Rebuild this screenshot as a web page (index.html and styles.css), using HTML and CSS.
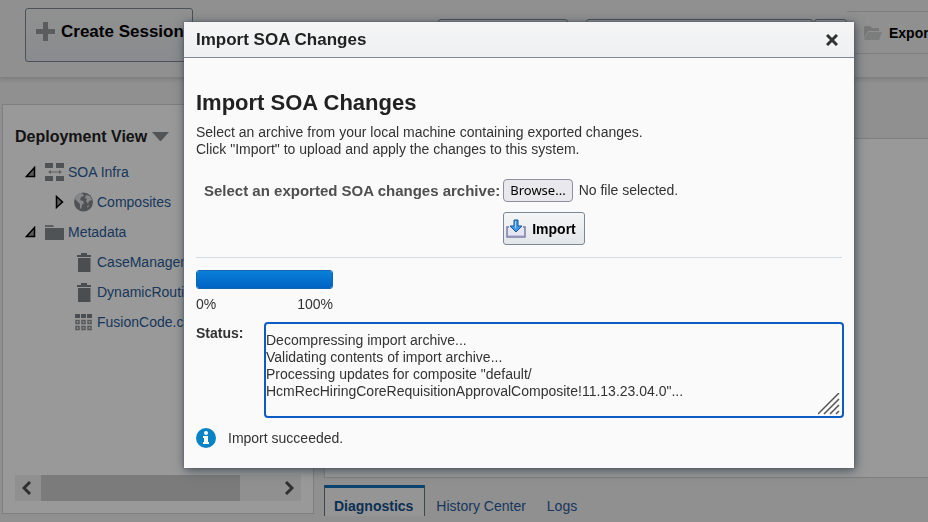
FILE: index.html
```html
<!DOCTYPE html>
<html lang="en">
<head>
    <meta charset="UTF-8">
    <title>Import SOA Changes</title>
    <link rel="stylesheet" href="styles.css">
</head>
<body>
    <header class="toolbar">
        <button class="create-button" type="button">
            <svg width="20" height="20" viewBox="0 0 20 20"><path d="M7 0h5v7h7v5h-7v7H7v-7H0V7h7z" fill="#96999c"/></svg>
            Create Session
        </button>
        <div class="toolbar-fields">
            <div class="field"></div>
            <div class="field field-wide"></div>
            <div class="field field-small"></div>
        </div>
        <div class="toolbar-actions">
            <button class="export-button" type="button">
                <svg width="20" height="16" viewBox="0 0 20 16"><path d="M1 13V2l1-1h5l2 2h7v3H5z" fill="#c8c9ca"/><path d="M1 15l4-8h14l-3 8z" fill="#cfd0d1"/></svg>
                Export
            </button>
        </div>
    </header>

    <main class="content">
        <section class="side-panel">
            <h2 class="side-title">Deployment View
                <svg width="17" height="10" viewBox="0 0 17 10"><path d="M0 0h17L9 9H8z" fill="#8a8d90"/></svg>
            </h2>
            <ul class="tree">
                <li class="node">
                    <svg class="arrow" width="12" height="12" viewBox="0 0 12 12"><path d="M9.500 1.500v9h-8z" fill="#999" stroke="#000" stroke-width="1.500"/></svg>
                    <svg class="icon" width="20" height="20" viewBox="0 0 20 20" fill="#868b8f"><path d="M0 1h8v5H0zM11 1h8v5h-8zM0 14h8v5H0zM11 14h8v5h-8z"/><path d="M3 10l3-2v1.500h8V8l3 2-3 2v-1.500H6V12z" fill="#9a9da0"/></svg>
                    <a href="#">SOA Infra</a>
                </li>
                <li class="node node-child">
                    <svg class="arrow" width="12" height="14" viewBox="0 0 12 14"><path d="M2.500 1.500v11l6-5.500z" fill="#999" stroke="#000" stroke-width="1.500"/></svg>
                    <svg class="icon" width="20" height="20" viewBox="0 0 20 20"><circle cx="9.500" cy="10" r="9.500" fill="#868b8f"/><path d="M2 4l4-3 3 1 1 2-3 1-1 3 3 1 1 2-2 2-1 4-1-1v-4L3 9 1 7zM12 3l4 1 2 4-3 1-1 3-2-3 1-2-2-1zM13 14l2-1-1 3z" fill="#dfe1e3"/></svg>
                    <a href="#">Composites</a>
                </li>
                <li class="node">
                    <svg class="arrow" width="12" height="12" viewBox="0 0 12 12"><path d="M9.500 1.500v9h-8z" fill="#999" stroke="#000" stroke-width="1.500"/></svg>
                    <svg class="icon" width="20" height="20" viewBox="0 0 20 20"><path d="M0 3h8l1 2H0z" fill="#9a9ea2"/><path d="M0 6h19v12H0z" fill="#868b8f"/></svg>
                    <a href="#">Metadata</a>
                </li>
                <li class="node node-child">
                    <span class="arrow"></span>
                    <svg class="icon" width="20" height="20" viewBox="0 0 20 20" fill="#7e8387"><path d="M3 3h4V1h6v2h4v2H3zM4 6h12.500v14H4z"/></svg>
                    <a href="#">CaseManagement</a>
                </li>
                <li class="node node-child">
                    <span class="arrow"></span>
                    <svg class="icon" width="20" height="20" viewBox="0 0 20 20" fill="#7e8387"><path d="M3 3h4V1h6v2h4v2H3zM4 6h12.500v14H4z"/></svg>
                    <a href="#">DynamicRouting</a>
                </li>
                <li class="node node-child">
                    <span class="arrow"></span>
                    <svg class="icon" width="20" height="20" viewBox="0 0 20 20"><path d="M1 2h5v4H1zM7 2h5v4H7zM13 2h5v4h-5z" fill="#7e8387"/><g fill="none" stroke="#8e9295" stroke-width="1.500"><path d="M2 8.500h3v3H2zM8 8.500h3v3H8zM14 8.500h3v3h-3zM2 14.500h3v3H2zM8 14.500h3v3H8zM14 14.500h3v3h-3z"/></g></svg>
                    <a href="#">FusionCode.core</a>
                </li>
            </ul>
            <div class="scrollbar">
                <button class="scroll-button" type="button" aria-label="Scroll left">
                    <svg width="12" height="14" viewBox="0 0 12 14"><path d="M8 1L2 7l6 6" fill="none" stroke="#505050" stroke-width="3"/></svg>
                </button>
                <div class="scroll-track"><div class="scroll-thumb"></div></div>
                <button class="scroll-button" type="button" aria-label="Scroll right">
                    <svg width="12" height="14" viewBox="0 0 12 14"><path d="M4 1l6 6-6 6" fill="none" stroke="#505050" stroke-width="3"/></svg>
                </button>
            </div>
        </section>
        <section class="work-area">
            <div class="work-panel"></div>
            <nav class="tabs">
                <a class="tab tab-active" href="#">Diagnostics</a>
                <a class="tab" href="#">History Center</a>
                <a class="tab" href="#">Logs</a>
            </nav>
        </section>
    </main>

    <div class="overlay"></div>

    <div class="dialog" role="dialog" aria-labelledby="dialog-title">
        <div class="dialog-header">
            <div class="dialog-title" id="dialog-title">Import SOA Changes</div>
            <button class="close-button" type="button" aria-label="Close">
                <svg width="12" height="12" viewBox="0 0 12 12"><path d="M1 1l10 10M11 1L1 11" stroke="#333" stroke-width="3"/></svg>
            </button>
        </div>
        <div class="dialog-body">
            <h1>Import SOA Changes</h1>
            <p class="intro">Select an archive from your local machine containing exported changes.<br>Click "Import" to upload and apply the changes to this system.</p>

            <div class="import-form">
                <label class="form-label" for="archive">Select an exported SOA changes archive:</label>
                <div class="file-picker">
                    <input class="file-input" type="file" id="archive">
                    <label class="browse-button" for="archive">Browse...</label>
                    <span>No file selected.</span>
                </div>
                <button class="import-button" type="button">
                    <svg width="20" height="20" viewBox="0 0 20 20">
                        <path d="M3 8H1v10h18V8h-2" fill="#e6e6f2" stroke="#7b7ba8" stroke-width="1.500"/>
                        <path d="M2 16h16v1H2z" fill="#c3c3dc"/>
                        <path d="M8 1h4v6h4l-6 6-6-6h4z" fill="#3f9be8" stroke="#17559f"/>
                        <path d="M9 2h1v7H9z" fill="#a9d8ff"/>
                    </svg>
                    Import
                </button>
            </div>

            <div class="progress-area">
                <progress class="progress" value="100" max="100" aria-label="Import progress"></progress>
                <div class="progress-scale"><span>0%</span><span>100%</span></div>
            </div>

            <div class="status-row">
                <label class="status-label" for="status">Status:</label>
                <div class="status-box">
                    <textarea class="status-text" id="status" readonly>Decompressing import archive...
Validating contents of import archive...
Processing updates for composite "default/
HcmRecHiringCoreRequisitionApprovalComposite!11.13.23.04.0"...</textarea>
                    <svg class="grip" width="22" height="22" viewBox="0 0 22 22"><path d="M0 21L21 0M6 21L21 6M12 21l9-9M18 21l3-3" stroke="#555" stroke-width="1.500"/></svg>
                </div>
            </div>

            <div class="message">
                <svg width="20" height="20" viewBox="0 0 20 20"><circle cx="10" cy="10" r="10" fill="#0a83c6"/><circle cx="10" cy="5" r="2" fill="#fff"/><path d="M7 8h5v6h1v2H7v-2h1v-4H7z" fill="#fff"/></svg>
                <span>Import succeeded.</span>
            </div>
        </div>
    </div>
</body>
</html>
```

FILE: styles.css
```css
* {
    box-sizing: border-box;
}
body {
    margin: 0;
    height: 100vh;
    overflow: hidden;
    display: flex;
    flex-direction: column;
    background: #f0f0f0;
    color: #333;
    font-family: "Liberation Sans", Arial, sans-serif;
    font-size: 14px;
    line-height: 17px;
}
button {
    font-family: inherit;
    cursor: pointer;
}
a {
    color: #2a5c9a;
    text-decoration: none;
}
ul, h1, h2, p {
    margin: 0;
    padding: 0;
    list-style: none;
}

/* Toolbar */
.toolbar {
    flex: none;
    display: flex;
    align-items: flex-start;
    height: 78px;
    padding: 8px 0 0 25px;
    border-bottom: 1px solid #d8d8d8;
    box-shadow: 0 2px 4px rgba(0,0,0,0.12);
}
.create-button {
    flex: none;
    width: 168px;
    height: 54px;
    display: flex;
    align-items: flex-start;
    gap: 5px;
    padding: 13px 10px;
    border: 1px solid #7d8894;
    border-radius: 3px;
    background: linear-gradient(#f2f2f2, #e4e8ed);
    color: #000;
    font-size: 17px;
    font-weight: bold;
    line-height: 20px;
    white-space: nowrap;
}
.create-button svg, .export-button svg {
    flex: none;
}
.toolbar-fields {
    flex: 1;
    display: flex;
    padding: 11px 0 0 245px;
}
.field {
    width: 130px;
    height: 32px;
    margin-right: 18px;
    border: 1px solid #7d8894;
    border-radius: 3px;
}
.field-wide {
    width: 227px;
    margin-right: 1px;
}
.field-small {
    width: 33px;
    margin-right: 0;
}
.toolbar-actions {
    flex: none;
    width: 82px;
    margin-top: 3px;
    overflow: hidden;
    border: 1px solid #d2d2d2;
    border-width: 1px 0;
}
.export-button {
    display: flex;
    align-items: center;
    gap: 6px;
    height: 41px;
    padding: 0 0 0 16px;
    border: 0;
    background: none;
    color: #000;
    font-size: 14px;
    font-weight: bold;
}

/* Page content */
.content {
    flex: 1;
    min-height: 0;
    display: flex;
    gap: 10px;
    padding: 26px 0 6px 2px;
}
.side-panel {
    flex: none;
    width: 312px;
    display: flex;
    flex-direction: column;
    margin-bottom: 2px;
    padding: 20px 12px 12px;
    border: 1px solid #d4d4d4;
    background: #fff;
}
.side-title {
    display: flex;
    align-items: center;
    gap: 5px;
    margin-bottom: 20px;
    color: #222;
    font-size: 16px;
    line-height: 24px;
}
.tree {
    flex: 1;
    margin-top: -12px;
    padding-left: 10px;
}
.node {
    display: flex;
    align-items: center;
    height: 30px;
    white-space: nowrap;
}
.node-child {
    padding-left: 29px;
}
.arrow {
    width: 12px;
    margin-right: 8px;
}
.icon {
    margin-right: 3px;
}
.scrollbar {
    display: flex;
    height: 26px;
    background: #f0f0f0;
}
.scroll-button {
    width: 26px;
    padding: 0;
    border: 0;
    background: none;
}
.scroll-button svg {
    display: block;
    margin: auto;
}
.scroll-track {
    flex: 1;
}
.scroll-thumb {
    width: 85%;
    height: 100%;
    background: #cdcdcd;
}
.work-area {
    flex: 1;
    display: flex;
    flex-direction: column;
    padding-top: 34px;
}
.work-panel {
    flex: 1;
    border: 1px solid #d4d4d4;
    border-right: 0;
    background: #fff;
}
.tabs {
    display: flex;
    gap: 1px;
    margin-top: 7px;
}
.tab {
    padding: 13px 10px 0;
    height: 31px;
}
.tab-active {
    padding: 10px 11px 0 9px;
    border: 1px solid #68737e;
    border-top: 3px solid #0f70b8;
    border-bottom: 0;
    background: #f8f8f8;
    color: #12508a;
    font-weight: bold;
}

.overlay {
    position: fixed;
    inset: 0;
    background: rgba(0,0,0,0.4);
}

/* Import dialog */
.dialog {
    position: absolute;
    top: 22px;
    left: 184px;
    right: 74px;
    background: #fafafa;
    box-shadow: 0 0 2px #4b5763, 1px 2px 10px rgba(30,45,60,0.7);
}
.dialog-header {
    display: flex;
    align-items: center;
    justify-content: space-between;
    height: 36px;
    padding: 0 16px 0 12px;
    border-bottom: 1px solid #808b96;
    background: linear-gradient(#f5f5f5, #eef0f2);
}
.dialog-title {
    color: #222;
    font-size: 17px;
    font-weight: bold;
}
.close-button {
    padding: 0;
    border: 0;
    background: none;
}
.close-button svg {
    display: block;
}
.dialog-body {
    padding: 32px 12px 20px;
}
h1 {
    margin-bottom: 8px;
    color: #222;
    font-size: 22px;
    line-height: 26px;
}
.import-form {
    display: grid;
    grid-template-columns: auto 1fr;
    gap: 10px 3px;
    margin-top: 21px;
    padding: 0 0 12px 8px;
    border-bottom: 1px solid #d3dbe3;
    align-items: center;
}
.form-label {
    color: #4f4f4f;
    font-size: 15px;
    font-weight: bold;
}
.file-picker {
    position: relative;
    display: flex;
    align-items: center;
    gap: 6px;
}
.file-input {
    position: absolute;
    inset: 0;
    opacity: 0;
}
.browse-button {
    height: 23px;
    padding: 0 6px;
    border: 1px solid #8f8f9d;
    border-radius: 4px;
    background: #e9e9ed;
    color: #000;
    font-family: "Noto Sans", sans-serif;
    font-size: 13px;
    line-height: 21px;
}
.import-button {
    grid-column: 2;
    justify-self: start;
    display: flex;
    align-items: center;
    gap: 6px;
    height: 33px;
    padding: 0 8px 0 2px;
    border: 1px solid #7b8896;
    border-radius: 3px;
    background: linear-gradient(#f5f6f7, #e2e6ea);
    color: #000;
    font-size: 14px;
    font-weight: bold;
}
.progress-area {
    width: 137px;
    margin: 12px 0 9px;
}
.progress {
    display: block;
    appearance: none;
    width: 100%;
    height: 19px;
    border: 1px solid #1565b0;
    border-radius: 3px;
    overflow: hidden;
}
.progress::-webkit-progress-bar {
    background: #fff;
}
.progress::-webkit-progress-value {
    background: linear-gradient(#0a80d8, #0062c4);
}
.progress-scale {
    display: flex;
    justify-content: space-between;
    margin-top: 7px;
}
.status-row {
    display: flex;
    margin-right: -2px;
}
.status-label {
    flex: none;
    width: 68px;
    padding-top: 3px;
    font-weight: bold;
}
.status-box {
    position: relative;
    flex: 1;
}
.status-text {
    display: block;
    width: 100%;
    height: 96px;
    padding: 8px 0 0;
    border: 2px solid #0f5bc4;
    border-radius: 4px;
    outline: 0;
    resize: none;
    background: #fafafa;
    color: #333;
    font: inherit;
}
.grip {
    position: absolute;
    right: 4px;
    bottom: 3px;
}
.message {
    display: flex;
    align-items: center;
    gap: 12px;
    margin-top: 10px;
}
```
